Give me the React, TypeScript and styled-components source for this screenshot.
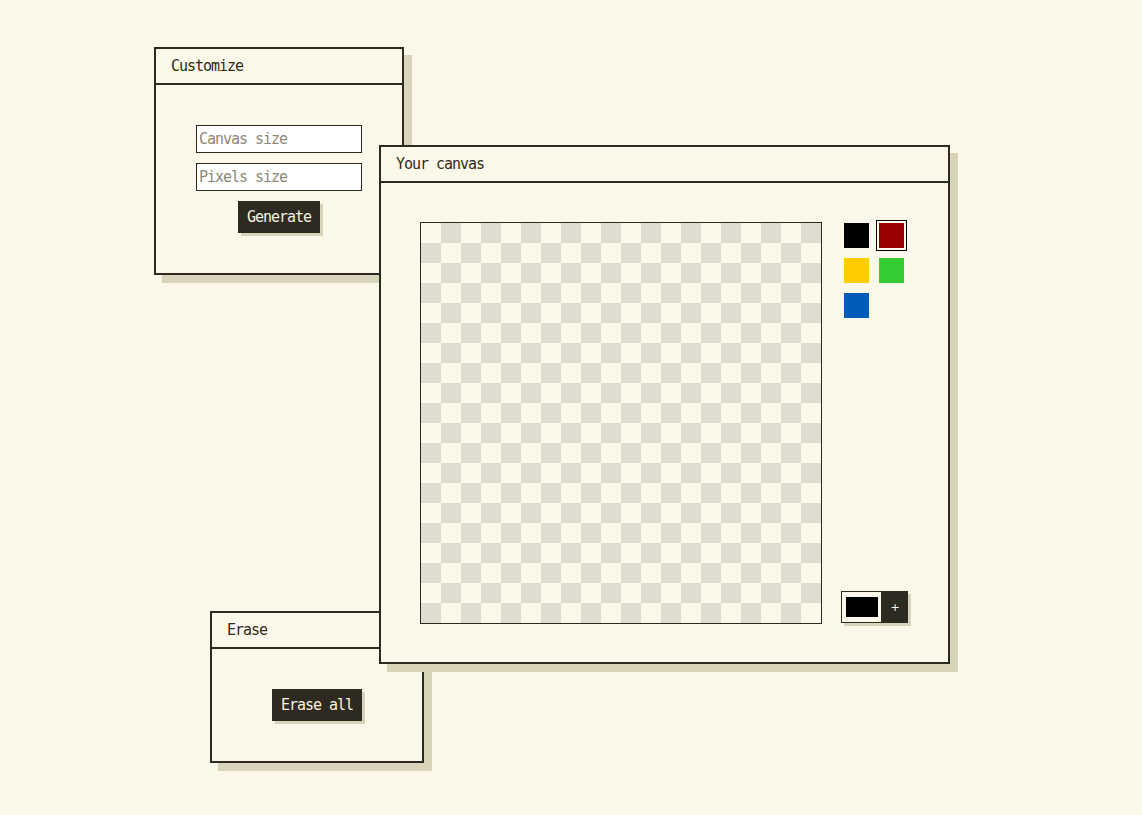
import React from "react";
import styled, { createGlobalStyle } from "styled-components";

const INK = "#2d2a22";
const BG = "#fbf8ea";
const SHADOW = "#d9d4b9";
const CHECK = "#dfddd0";
const FONT = `"DejaVu Sans Mono", "Liberation Mono", monospace`;

const Global = createGlobalStyle`
  html, body { margin: 0; padding: 0; background: ${BG}; }
  body { font-family: ${FONT}; color: ${INK}; }
  * { box-sizing: border-box; }
`;

const Desktop = styled.div`
  position: relative;
  width: 1142px;
  height: 815px;
  overflow: hidden;
  background: ${BG};
`;

const Window = styled.section<{ $x: number; $y: number; $w: number; $h: number }>`
  position: absolute;
  left: ${(p) => p.$x}px;
  top: ${(p) => p.$y}px;
  width: ${(p) => p.$w}px;
  height: ${(p) => p.$h}px;
  border: 2px solid ${INK};
  background: ${BG};
  box-shadow: 8px 8px 0 ${SHADOW};
  display: flex;
  flex-direction: column;
`;

const TitleBar = styled.header`
  height: 36px;
  flex: none;
  border-bottom: 2px solid ${INK};
  display: flex;
  align-items: center;
  padding: 0 15px;
  font-size: 15px;
  letter-spacing: -1.03px;
`;

const FormBody = styled.div`
  flex: 1;
  padding: 40px;
  display: flex;
  flex-direction: column;
  align-items: center;
  gap: 10px;
`;

const Input = styled.input`
  width: 100%;
  height: 28px;
  border: 1px solid ${INK};
  background: #fff;
  padding: 0 2px;
  font-family: ${FONT};
  font-size: 15px;
  letter-spacing: -1.03px;
  color: ${INK};
  outline: none;
  &::placeholder { color: #8b8878; }
`;

const Button = styled.button<{ $w: number }>`
  width: ${(p) => p.$w}px;
  height: 32px;
  border: none;
  background: ${INK};
  color: #f6f1dd;
  box-shadow: 3px 3px 0 ${SHADOW};
  font-family: ${FONT};
  font-size: 15px;
  letter-spacing: -1.03px;
  padding: 0;
  cursor: pointer;
`;

const CanvasBody = styled.div`
  flex: 1;
  padding: 39px 40px 38px 39px;
  display: flex;
  gap: 19px;
`;

const Grid = styled.div`
  width: 402px;
  height: 402px;
  border: 1px solid ${INK};
  display: grid;
  grid-template-columns: repeat(20, 20px);
  grid-template-rows: repeat(20, 20px);
`;

const Cell = styled.div<{ $dark: boolean }>`
  background: ${(p) => (p.$dark ? CHECK : BG)};
`;

const Side = styled.div`
  display: flex;
  flex-direction: column;
  align-items: flex-end;
  justify-content: space-between;
  padding: 1px 0 1px;
`;

const Palette = styled.div`
  display: grid;
  grid-template-columns: repeat(2, 25px);
  gap: 10px;
  margin-right: 4px;
`;

const Swatch = styled.div<{ $c: string; $sel?: boolean }>`
  width: 25px;
  height: 25px;
  background: ${(p) => p.$c};
  outline: ${(p) => (p.$sel ? `1px solid #000` : "none")};
  outline-offset: 2px;
`;

const Picker = styled.div`
  display: flex;
  width: 67px;
  height: 32px;
  box-shadow: 3px 3px 0 ${SHADOW};
`;

const ColorWell = styled.div`
  width: 41px;
  height: 32px;
  border: 1px solid ${INK};
  background: ${BG};
  padding: 5px 3px 5px 4px;
`;

const ColorFill = styled.div<{ $c: string }>`
  width: 100%;
  height: 100%;
  background: ${(p) => p.$c};
`;

const AddButton = styled.button`
  width: 26px;
  height: 32px;
  border: none;
  padding: 0;
  background: ${INK};
  color: #fff;
  font-family: "DejaVu Sans", sans-serif;
  font-size: 11px;
  display: flex;
  align-items: center;
  justify-content: center;
`;

const swatches = [
  { c: "#000000" },
  { c: "#990000", sel: true },
  { c: "#ffcc00" },
  { c: "#33cc33" },
  { c: "#005cb6" },
];

export default function App() {
  const cells = [];
  for (let r = 0; r < 20; r++) {
    for (let c = 0; c < 20; c++) {
      cells.push(<Cell key={`${r}-${c}`} $dark={(r + c) % 2 === 1} />);
    }
  }
  return (
    <Desktop>
      <Global />
      <Window $x={154} $y={47} $w={250} $h={228}>
        <TitleBar>Customize</TitleBar>
        <FormBody>
          <Input placeholder="Canvas size" />
          <Input placeholder="Pixels size" />
          <Button $w={82}>Generate</Button>
        </FormBody>
      </Window>
      <Window $x={210} $y={611} $w={214} $h={152}>
        <TitleBar>Erase</TitleBar>
        <FormBody>
          <Button $w={90}>Erase all</Button>
        </FormBody>
      </Window>
      <Window $x={379} $y={145} $w={571} $h={519}>
        <TitleBar>Your canvas</TitleBar>
        <CanvasBody>
          <Grid>{cells}</Grid>
          <Side>
            <Palette>
              {swatches.map((s, i) => (
                <Swatch key={i} $c={s.c} $sel={s.sel} />
              ))}
            </Palette>
            <Picker>
              <ColorWell>
                <ColorFill $c="#000000" />
              </ColorWell>
              <AddButton>+</AddButton>
            </Picker>
          </Side>
        </CanvasBody>
      </Window>
    </Desktop>
  );
}
